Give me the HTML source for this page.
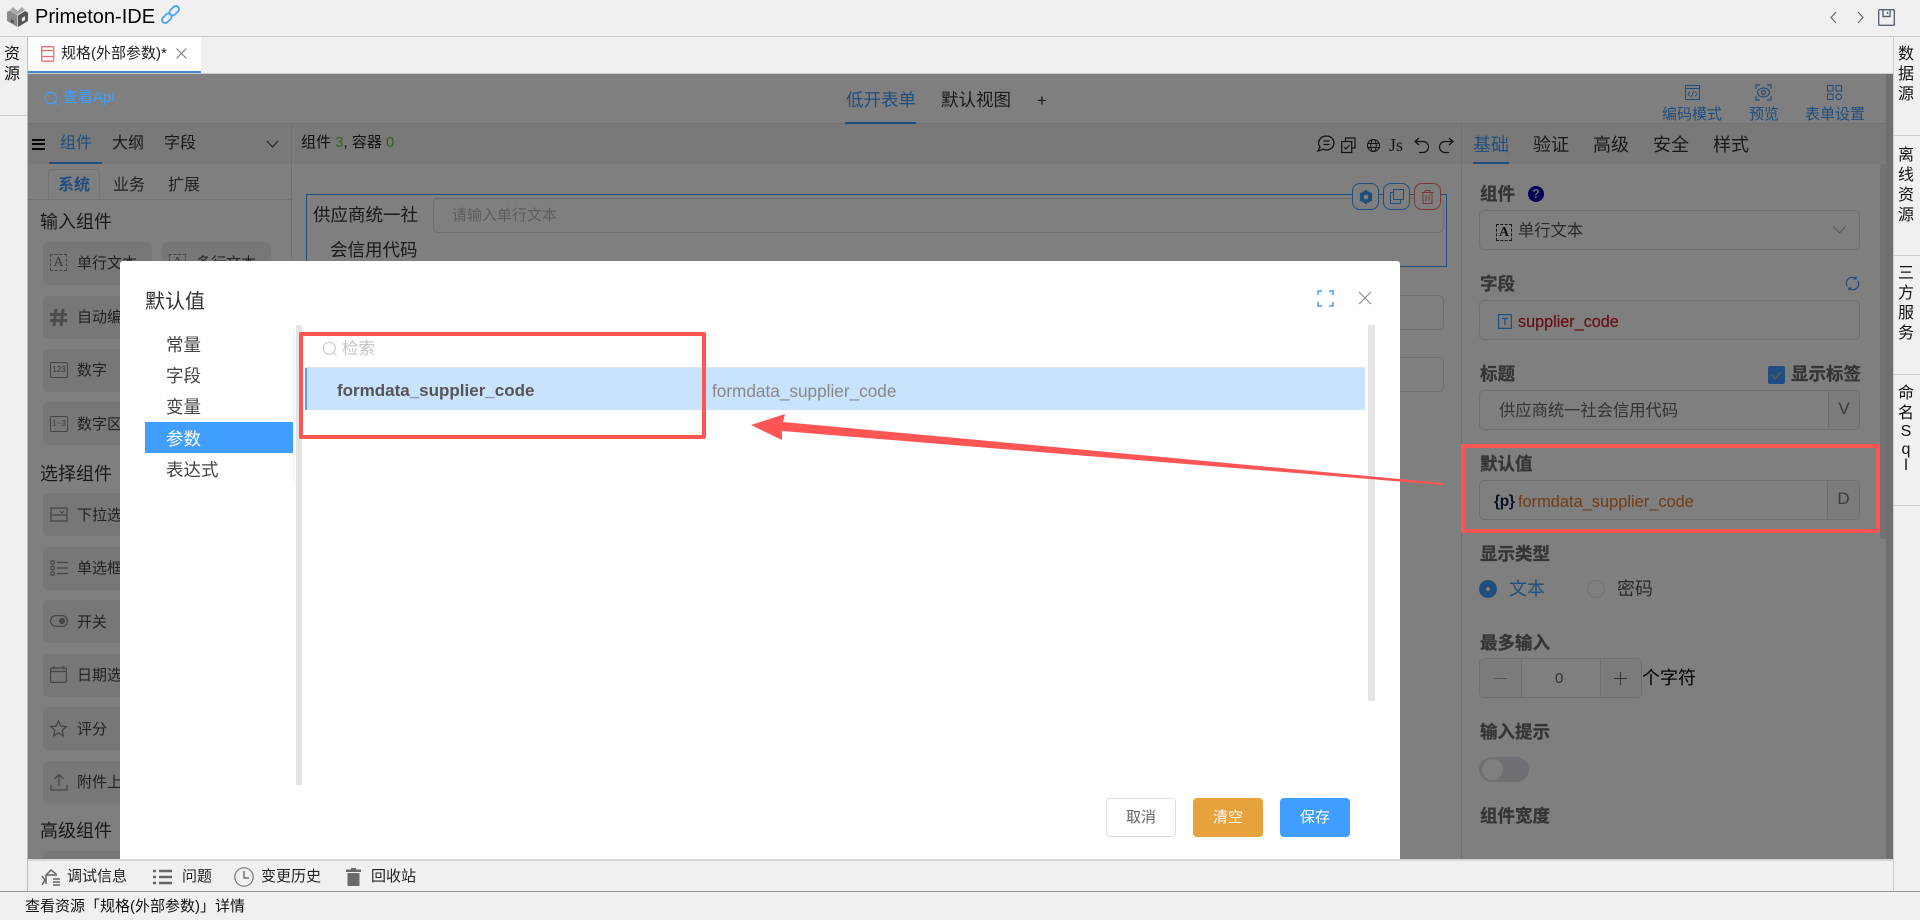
<!DOCTYPE html>
<html lang="zh-CN"><head><meta charset="utf-8"><title>Primeton-IDE</title>
<style>
*{box-sizing:border-box}
html,body{margin:0;padding:0;width:1920px;height:920px;overflow:hidden;background:#f0f0f0;font-family:"Liberation Sans","Noto Sans CJK SC",sans-serif;color:#000}
.a{position:absolute}
.t{position:absolute;white-space:nowrap;line-height:20px;height:20px}
svg{position:absolute;overflow:visible}
.b{font-weight:bold}
.card{position:absolute;background:#eeeef1;border-radius:5px;width:109px;height:43px}
.ct{position:absolute;white-space:nowrap;line-height:20px;height:20px;font-size:15px;color:#444;left:77px}
.lbl{position:absolute;white-space:nowrap;line-height:20px;height:20px;font-size:17.5px;font-weight:bold;color:#6a6a6a;-webkit-text-stroke:.3px #6a6a6a}
.inp{position:absolute;border:1px solid #dcdfe6;border-radius:5px;background:#fff}
.v{position:absolute;width:20px;text-align:center;line-height:20px;height:20px;font-size:16px;color:#111;white-space:nowrap}
.ln{position:absolute;background:#ccc}
</style></head><body>

<!-- title bar -->
<svg style="left:7px;top:7px" width="21" height="20" viewBox="0 0 21 20"><path d="M0 5l3-1.500 4 2.500 3.500 2.500v11.500L0 14z" fill="#8a8a8a"/><path d="M11 8.500L18 4l3 1.500V14l-10 6z" fill="#555"/><path d="M3 3l3-3 4.500 4 4.500-4 3 3-7.500 5z" fill="#a8a8a8"/><path d="M15 11l3-1.800V13l-3 1.800z" fill="#f0f0f0"/><path d="M4 12l3 1.800v3L4 15z" fill="#555"/></svg>
<div class="t" style="left:35px;top:7px;font-size:20px">Primeton-IDE</div>
<svg style="left:161px;top:5px" width="19" height="19" viewBox="0 0 19 19" fill="none" stroke="#409eff" stroke-width="1.700"><rect x="-5.500" y="-3.200" width="11" height="6.400" rx="3.200" transform="translate(5.800 13.200) rotate(-45)"/><rect x="-5.500" y="-3.200" width="11" height="6.400" rx="3.200" transform="translate(13.200 5.800) rotate(-45)"/></svg>
<svg style="left:1829px;top:10px" width="10" height="15" viewBox="0 0 10 15" fill="none" stroke="#666" stroke-width="1.100"><path d="M7 2L2 7.500 7 13"/></svg>
<svg style="left:1855px;top:10px" width="10" height="15" viewBox="0 0 10 15" fill="none" stroke="#666" stroke-width="1.100"><path d="M3 2l5 5.500L3 13"/></svg>
<svg style="left:1878px;top:9px" width="17" height="17" viewBox="0 0 17 17" fill="none" stroke="#5a6472" stroke-width="1.400"><rect x=".7" y=".7" width="15.600" height="15.600" rx="1"/><path d="M5 1v6.500h7V1M9.500 3v2"/></svg>
<div class="a" style="left:0;top:36px;width:1920px;height:1px;background:#ccc"></div>

<!-- left rail -->
<div class="v" style="left:2px;top:45px">资</div>
<div class="v" style="left:2px;top:65px">源</div>
<div class="ln" style="left:0;top:115px;width:27px;height:1px"></div>
<div class="ln" style="left:27px;top:37px;width:1px;height:855px;background:#bbb"></div>

<!-- right rail -->
<div class="ln" style="left:1893px;top:37px;width:1px;height:855px;background:#ccc"></div>
<div class="v" style="left:1896px;top:45px">数</div><div class="v" style="left:1896px;top:65px">据</div><div class="v" style="left:1896px;top:85px">源</div>
<div class="ln" style="left:1894px;top:135px;width:26px;height:1px"></div>
<div class="v" style="left:1896px;top:146px">离</div><div class="v" style="left:1896px;top:166px">线</div><div class="v" style="left:1896px;top:186px">资</div><div class="v" style="left:1896px;top:206px">源</div>
<div class="ln" style="left:1894px;top:255px;width:26px;height:1px"></div>
<div class="v" style="left:1896px;top:264px">三</div><div class="v" style="left:1896px;top:284px">方</div><div class="v" style="left:1896px;top:304px">服</div><div class="v" style="left:1896px;top:324px">务</div>
<div class="ln" style="left:1894px;top:374px;width:26px;height:1px"></div>
<div class="v" style="left:1896px;top:384px">命</div><div class="v" style="left:1896px;top:404px">名</div><div class="v" style="left:1896px;top:422px">S</div><div class="v" style="left:1896px;top:440px">q</div><div class="v" style="left:1896px;top:456px">l</div>
<div class="ln" style="left:1894px;top:505px;width:26px;height:1px"></div>

<!-- tab -->
<div class="a" style="left:28px;top:37px;width:173px;height:36px;background:#fff;border-bottom:2px solid #4a86d0"></div>
<svg style="left:41px;top:46px" width="14" height="16" viewBox="0 0 14 16" fill="none" stroke="#f56c6c" stroke-width="1.300"><rect x=".7" y=".7" width="12" height="14.500" rx="1"/><path d="M.7 4.500h12M.7 10.500h12"/></svg>
<div class="t" style="left:61px;top:44px;font-size:15px;color:#222">规格(外部参数)*</div>
<svg style="left:176px;top:48px" width="11" height="11" viewBox="0 0 11 11" stroke="#777" stroke-width="1"><path d="M.5.5l10 10M10.500.5l-10 10"/></svg>
<div class="a" style="left:28px;top:73px;width:1865px;height:1px;background:#ccc"></div>

<!-- underlying page -->
<div class="a" style="left:28px;top:74px;width:1865px;height:785px;background:#fff"></div>
<div class="a" style="left:28px;top:123px;width:1858px;height:1px;background:#e4e4e4"></div>
<div class="a" style="left:28px;top:124px;width:1858px;height:40px;background:#f2f2f2"></div>
<div class="a" style="left:1886px;top:74px;width:7px;height:785px;background:#dedede"></div>
<div class="a" style="left:1880px;top:164px;width:6px;height:375px;background:#e6e6e6"></div>

<div class="t" style="left:846px;top:90px;font-size:17.500px;color:#409eff">低开表单</div>
<div class="a" style="left:845px;top:122px;width:71px;height:2px;background:#409eff"></div>
<div class="t" style="left:941px;top:90px;font-size:17.500px;color:#333">默认视图</div>
<div class="t" style="left:1037px;top:91px;font-size:17px;color:#222">+</div>

<!-- header right icons -->
<svg style="left:1685px;top:85px" width="15" height="15" viewBox="0 0 15 15" fill="none" stroke="#4a9af0" stroke-width="1"><rect x=".5" y=".5" width="14" height="14"/><path d="M.5 3.500h14M5 6.500L3 9l2 2.500M10 6.500L12 9l-2 2.500M8.500 6l-2 6"/></svg>
<svg style="left:1755px;top:84px" width="17" height="17" viewBox="0 0 17 17" fill="none" stroke="#4a9af0" stroke-width="1.200"><path d="M1 5V1h4M12 1h4v4M16 12v4h-4M5 16H1v-4"/><ellipse cx="8.500" cy="8.500" rx="6" ry="4.500"/><circle cx="8.500" cy="8.500" r="2"/></svg>
<svg style="left:1827px;top:85px" width="15" height="15" viewBox="0 0 15 15" fill="none" stroke="#4a9af0" stroke-width="1.100"><rect x=".5" y=".5" width="5.500" height="5.500"/><rect x="9" y=".5" width="5.500" height="5.500"/><rect x=".5" y="9" width="5.500" height="5.500"/><circle cx="11.700" cy="11.700" r="2.800"/></svg>
<div class="t" style="left:1662px;top:105px;font-size:15px;color:#409eff">编码模式</div>
<div class="t" style="left:1749px;top:105px;font-size:15px;color:#409eff">预览</div>
<div class="t" style="left:1805px;top:105px;font-size:15px;color:#409eff">表单设置</div>

<!-- left panel -->
<div class="a" style="left:291px;top:124px;width:1px;height:735px;background:#e2e2e2"></div>
<div class="a" style="left:32px;top:139px;width:13px;height:11px;border-top:2px solid #111;border-bottom:2px solid #111"></div>
<div class="a" style="left:32px;top:143px;width:13px;height:2px;background:#111"></div>
<div class="t" style="left:60px;top:134px;font-size:16px;color:#409eff">组件</div>
<div class="t" style="left:112px;top:134px;font-size:16px;color:#333">大纲</div>
<div class="t" style="left:164px;top:134px;font-size:16px;color:#333">字段</div>
<svg style="left:266px;top:140px" width="13" height="9" viewBox="0 0 13 9" fill="none" stroke="#333" stroke-width="1"><path d="M1 1l5.500 6L12 1"/></svg>
<div class="a" style="left:49px;top:162px;width:53px;height:2px;background:#409eff"></div>
<div class="a" style="left:28px;top:199px;width:263px;height:1px;background:#e8e8e8"></div>
<div class="a" style="left:48px;top:169px;width:52px;height:30px;background:#fff;border:1px solid #e4e7ed;border-bottom:0;border-radius:4px 4px 0 0"></div>
<div class="t b" style="left:58px;top:176px;font-size:16px;color:#409eff">系统</div>
<div class="t" style="left:113px;top:176px;font-size:16px;color:#444">业务</div>
<div class="t" style="left:168px;top:176px;font-size:16px;color:#444">扩展</div>
<div class="t" style="left:40px;top:212px;font-size:18px;color:#333">输入组件</div>
<div class="t" style="left:40px;top:464px;font-size:18px;color:#333">选择组件</div>
<div class="t" style="left:40px;top:821px;font-size:18px;color:#333">高级组件</div>

<div class="card" style="left:43px;top:242px"></div>
<div class="card" style="left:162px;top:242px"></div>
<div class="card" style="left:43px;top:296px"></div>
<div class="card" style="left:43px;top:349px"></div>
<div class="card" style="left:43px;top:402px"></div>
<div class="card" style="left:43px;top:493px"></div>
<div class="card" style="left:43px;top:547px"></div>
<div class="card" style="left:43px;top:600px"></div>
<div class="card" style="left:43px;top:654px"></div>
<div class="card" style="left:43px;top:707px"></div>
<div class="card" style="left:43px;top:761px"></div>
<div class="card" style="left:43px;top:851px;height:8px;border-radius:5px 5px 0 0"></div>

<div class="a" style="left:50px;top:254px;width:17px;height:17px;border:1px dashed #888;text-align:center;line-height:15px;font-family:'Liberation Serif',serif;font-size:14px;color:#777">A</div>
<div class="ct" style="top:254px">单行文本</div>
<div class="a" style="left:169px;top:254px;width:17px;height:17px;border:1px dashed #888;text-align:center;line-height:15px;font-family:'Liberation Serif',serif;font-size:14px;color:#777">A</div>
<div class="ct" style="top:254px;left:196px">多行文本</div>
<svg style="left:50px;top:309px" width="17" height="17" viewBox="0 0 17 17" fill="none" stroke="#999" stroke-width="3"><path d="M6 0L4 17M13 0l-2 17M0 5.500h17M0 11.500h17"/></svg>
<div class="ct" style="top:308px">自动编号</div>
<div class="a" style="left:50px;top:362px;width:18px;height:16px;border:1px solid #888;border-radius:2px;text-align:center;line-height:14px;font-size:8px;color:#777">123</div>
<div class="ct" style="top:361px">数字</div>
<div class="a" style="left:50px;top:416px;width:18px;height:16px;border:1px solid #888;border-radius:2px;text-align:center;line-height:14px;font-size:8px;color:#777">1~3</div>
<div class="ct" style="top:415px">数字区间</div>
<svg style="left:50px;top:507px" width="18" height="15" viewBox="0 0 18 15" fill="none" stroke="#888" stroke-width="1.200"><path d="M1 8V1h16v7H1zM1 8v6h16V8M10 4l2 2 2-2"/></svg>
<div class="ct" style="top:506px">下拉选择</div>
<svg style="left:50px;top:560px" width="18" height="16" viewBox="0 0 18 16" fill="none" stroke="#888" stroke-width="1.200"><circle cx="2.500" cy="2.500" r="1.800"/><circle cx="2.500" cy="8" r="1.800"/><circle cx="2.500" cy="13.500" r="1.800"/><path d="M7 2.500h11M7 8h11M7 13.500h11"/></svg>
<div class="ct" style="top:559px">单选框组</div>
<svg style="left:50px;top:615px" width="18" height="12" viewBox="0 0 18 12" fill="none" stroke="#888" stroke-width="1.200"><rect x=".6" y=".6" width="16.800" height="10.800" rx="5.400"/><circle cx="12" cy="6" r="2.500" fill="#888"/></svg>
<div class="ct" style="top:613px">开关</div>
<svg style="left:50px;top:666px" width="17" height="17" viewBox="0 0 17 17" fill="none" stroke="#888" stroke-width="1.200"><rect x=".6" y="2" width="15.800" height="14.400" rx="1"/><path d="M.6 5.500h15.800M4 0v3.500M13 0v3.500"/></svg>
<div class="ct" style="top:666px">日期选择</div>
<svg style="left:50px;top:720px" width="17" height="17" viewBox="0 0 17 17" fill="none" stroke="#888" stroke-width="1.300"><path d="M8.500 1l2.300 5 5.400.6-4 3.700 1.100 5.400-4.800-2.700-4.800 2.700 1.100-5.400-4-3.700 5.400-.6z"/></svg>
<div class="ct" style="top:720px">评分</div>
<svg style="left:50px;top:773px" width="18" height="18" viewBox="0 0 18 18" fill="none" stroke="#888" stroke-width="1.300"><path d="M9 13V1.500M4.500 6L9 1.500 13.500 6M1 12v5h16v-5"/></svg>
<div class="ct" style="top:773px">附件上传</div>

<!-- toolbar -->
<div class="t" style="left:301px;top:133px;font-size:15px;color:#222">组件 <span style="color:#67c23a">3</span>, 容器 <span style="color:#67c23a">0</span></div>
<svg style="left:1317px;top:135px" width="18" height="17" viewBox="0 0 18 17" fill="none" stroke="#222" stroke-width="1.300"><path d="M9.500 1a7.500 7 0 1 1-3.500 13.200L1 16l2-4A7.500 7 0 0 1 9.500 1zM6.500 6h6M6.500 9.500h6"/></svg>
<svg style="left:1341px;top:137px" width="15" height="16" viewBox="0 0 15 16" fill="none" stroke="#222" stroke-width="1.200"><path d="M4.500 4V1h9.500v10h-3"/><rect x=".7" y="4.500" width="10" height="11"/><path d="M3 10l2 2 3.500-4"/></svg>
<svg style="left:1367px;top:139px" width="13" height="13" viewBox="0 0 13 13" fill="none" stroke="#222"><circle cx="6.500" cy="6.500" r="6"/><ellipse cx="6.500" cy="6.500" rx="2.800" ry="6"/><path d="M.5 4.500h12M.5 8.500h12"/></svg>
<div class="t" style="left:1389px;top:135px;font-size:18px;font-family:'Liberation Serif',serif;color:#333">Js</div>
<svg style="left:1414px;top:137px" width="16" height="16" viewBox="0 0 16 16" fill="none" stroke="#222" stroke-width="1.200"><path d="M5 1L1 4.500 5 8M1 4.500h8a5.500 5.500 0 0 1 0 11H5"/></svg>
<svg style="left:1438px;top:137px" width="16" height="16" viewBox="0 0 16 16" fill="none" stroke="#222" stroke-width="1.200"><path d="M11 1l4 3.500L11 8M15 4.500H7a5.500 5.500 0 0 0 0 11h4"/></svg>

<!-- canvas -->
<div class="a" style="left:306px;top:194px;width:1141px;height:73px;border:1px solid #409eff"></div>
<div class="t" style="left:313px;top:205px;font-size:17.500px;color:#333">供应商统一社</div>
<div class="t" style="left:330px;top:240px;font-size:17.500px;color:#333">会信用代码</div>
<div class="inp" style="left:433px;top:198px;width:1011px;height:35px"></div>
<div class="t" style="left:452px;top:206px;font-size:15px;color:#bbb">请输入单行文本</div>
<div class="inp" style="left:1300px;top:295px;width:144px;height:35px"></div>
<div class="inp" style="left:1300px;top:357px;width:144px;height:35px"></div>
<div class="a" style="left:1352px;top:183px;width:27px;height:27px;border:1px solid #409eff;border-radius:8px;background:#fff"></div>
<div class="a" style="left:1383px;top:183px;width:27px;height:27px;border:1px solid #409eff;border-radius:8px;background:#fff"></div>
<div class="a" style="left:1414px;top:183px;width:27px;height:27px;border:1px solid #f56c6c;border-radius:8px;background:#fff"></div>
<svg style="left:1359px;top:190px" width="14" height="14" viewBox="0 0 14 14"><circle cx="7" cy="7" r="4.500" fill="none" stroke="#409eff" stroke-width="3.400"/><path d="M7 0v14M1 3.500l12 7M13 3.500l-12 7" stroke="#409eff" stroke-width="2"/><circle cx="7" cy="7" r="2.200" fill="#fff"/></svg>
<svg style="left:1390px;top:189px" width="14" height="15" viewBox="0 0 14 15" fill="none" stroke="#409eff"><rect x="3.500" y=".5" width="10" height="10"/><path d="M3.500 3.500h-3v11h10v-4"/></svg>
<svg style="left:1421px;top:190px" width="13" height="14" viewBox="0 0 13 14" fill="none" stroke="#f56c6c"><path d="M.5 2.500h12M4 2.500V.5h5v2M2 2.500v11h9v-11M5 5v6M8 5v6"/></svg>

<!-- right panel -->
<div class="a" style="left:1461px;top:124px;width:1px;height:735px;background:#e2e2e2"></div>
<div class="t" style="left:1473px;top:135px;font-size:18px;color:#409eff">基础</div>
<div class="t" style="left:1533px;top:135px;font-size:18px;color:#333">验证</div>
<div class="t" style="left:1593px;top:135px;font-size:18px;color:#333">高级</div>
<div class="t" style="left:1653px;top:135px;font-size:18px;color:#333">安全</div>
<div class="t" style="left:1713px;top:135px;font-size:18px;color:#333">样式</div>
<div class="a" style="left:1473px;top:162px;width:36px;height:2px;background:#409eff"></div>

<div class="lbl" style="left:1480px;top:184px">组件</div>
<div class="a" style="left:1528px;top:186px;width:16px;height:16px;border-radius:50%;background:#0000a8;color:#ccc;font-size:13px;font-weight:bold;text-align:center;line-height:16px">?</div>
<div class="inp" style="left:1479px;top:210px;width:381px;height:40px"></div>
<div class="a" style="left:1496px;top:224px;width:16px;height:17px;border:1px dashed #333;text-align:center;line-height:15px;font-family:'Liberation Serif',serif;font-weight:bold;font-size:14px;color:#222">A</div>
<div class="t" style="left:1518px;top:221px;font-size:16.300px;color:#555">单行文本</div>
<svg style="left:1833px;top:226px" width="13" height="8" viewBox="0 0 13 8" fill="none" stroke="#aaa"><path d="M.5.5l6 6.500 6-6.500"/></svg>

<div class="lbl" style="left:1480px;top:274px">字段</div>
<svg style="left:1845px;top:276px" width="15" height="15" viewBox="0 0 15 15" fill="none" stroke="#409eff" stroke-width="1.300"><path d="M2 10A6 6 0 0 1 11 2.500M13 5a6 6 0 0 1-9 7.500M11 .5v2.500H8.500M4 14.500V12h2.500"/></svg>
<div class="inp" style="left:1479px;top:300px;width:381px;height:40px"></div>
<svg style="left:1498px;top:314px" width="14" height="15" viewBox="0 0 14 15" fill="none" stroke="#409eff" stroke-width="1.200"><rect x=".6" y=".6" width="12.800" height="13.800"/><path d="M4 4.500h6M7 4.500v6.500"/></svg>
<div class="t" style="left:1518px;top:312px;font-size:16.200px;color:#d01f26;-webkit-text-stroke:.2px #d01f26">supplier_code</div>

<div class="lbl" style="left:1480px;top:364px">标题</div>
<div class="a" style="left:1768px;top:366px;width:17px;height:18px;background:#409eff;border-radius:2px"></div>
<svg style="left:1771px;top:371px" width="11" height="9" viewBox="0 0 11 9" fill="none" stroke="#bbb" stroke-width="1.200"><path d="M1 4l3.500 3.500L10 1"/></svg>
<div class="lbl" style="left:1791px;top:364px">显示标签</div>
<div class="inp" style="left:1479px;top:390px;width:381px;height:40px"></div>
<div class="a" style="left:1828px;top:391px;width:31px;height:38px;background:#f5f7fa;border-left:1px solid #dcdfe6;border-radius:0 4px 4px 0;text-align:center;line-height:36px;font-size:17px;color:#777">V</div>
<div class="t" style="left:1499px;top:401px;font-size:16.300px;color:#666">供应商统一社会信用代码</div>

<div class="lbl" style="left:1480px;top:454px">默认值</div>
<div class="inp" style="left:1479px;top:480px;width:381px;height:40px"></div>
<div class="a" style="left:1827px;top:481px;width:32px;height:38px;background:#f5f7fa;border-left:1px solid #dcdfe6;border-radius:0 4px 4px 0;text-align:center;line-height:36px;font-size:17px;color:#777">D</div>
<div class="t b" style="left:1494px;top:492px;font-size:15.500px;color:#11224a;letter-spacing:-.3px">{p}</div>
<div class="t" style="left:1518px;top:492px;font-size:16.400px;color:#e6792a">formdata_supplier_code</div>

<div class="lbl" style="left:1480px;top:544px">显示类型</div>
<div class="a" style="left:1479px;top:580px;width:18px;height:18px;border-radius:50%;background:#409eff"></div>
<div class="a" style="left:1486px;top:587px;width:4px;height:4px;border-radius:50%;background:#fff"></div>
<div class="t" style="left:1509px;top:579px;font-size:18px;color:#409eff">文本</div>
<div class="a" style="left:1587px;top:580px;width:18px;height:18px;border-radius:50%;border:1px solid #dcdfe6"></div>
<div class="t" style="left:1617px;top:579px;font-size:18px;color:#555">密码</div>

<div class="lbl" style="left:1480px;top:633px">最多输入</div>
<div class="inp" style="left:1479px;top:658px;width:163px;height:40px;overflow:hidden">
<div class="a" style="left:0;top:0;width:42px;height:38px;background:#f5f7fa;border-right:1px solid #dcdfe6"></div>
<div class="a" style="right:0;top:0;width:41px;height:38px;background:#f5f7fa;border-left:1px solid #dcdfe6"></div>
</div>
<div class="a" style="left:1494px;top:678px;width:13px;height:1px;background:#aaa"></div>
<div class="a" style="left:1614px;top:678px;width:13px;height:1px;background:#666"></div>
<div class="a" style="left:1620px;top:672px;width:1px;height:13px;background:#666"></div>
<div class="t" style="left:1555px;top:669px;font-size:15px;color:#666">0</div>
<div class="t" style="left:1642px;top:668px;font-size:18px;color:#000">个字符</div>

<div class="lbl" style="left:1480px;top:722px">输入提示</div>
<div class="a" style="left:1479px;top:757px;width:50px;height:25px;border-radius:13px;background:#dfe1e7"></div>
<div class="a" style="left:1482px;top:759px;width:21px;height:21px;border-radius:50%;background:#fff"></div>
<div class="lbl" style="left:1480px;top:806px">组件宽度</div>

<!-- overlay -->
<div class="a" style="left:28px;top:74px;width:1865px;height:785px;background:rgba(0,0,0,.5)"></div>

<!-- API link on top -->
<svg style="left:44px;top:91px" width="15" height="15" viewBox="0 0 15 15" fill="none" stroke="#409eff" stroke-width="1.100"><circle cx="7" cy="7" r="5.800"/><path d="M11 11l3 3"/></svg>
<div class="t" style="left:63px;top:88px;font-size:15px;color:#409eff">查看Api</div>

<!-- modal -->
<div class="a" style="left:120px;top:261px;width:1280px;height:598px;background:#fff;border-radius:3px 3px 0 0"></div>
<div class="t" style="left:145px;top:292px;font-size:20px;color:#303133">默认值</div>
<svg style="left:1317px;top:290px" width="17" height="17" viewBox="0 0 17 17" fill="none" stroke="#409eff" stroke-width="1.500"><path d="M1 5V1h4M12 1h4v4M16 12v4h-4M5 16H1v-4"/></svg>
<svg style="left:1358px;top:291px" width="14" height="14" viewBox="0 0 14 14" stroke="#888" stroke-width="1.100"><path d="M1 1l12 12M13 1L1 13"/></svg>

<div class="t" style="left:166px;top:335px;font-size:17.500px;color:#444">常量</div>
<div class="t" style="left:166px;top:366px;font-size:17.500px;color:#444">字段</div>
<div class="t" style="left:166px;top:397px;font-size:17.500px;color:#444">变量</div>
<div class="a" style="left:145px;top:422px;width:148px;height:31px;background:#409eff"></div>
<div class="t" style="left:166px;top:429px;font-size:17.500px;color:#fff">参数</div>
<div class="t" style="left:166px;top:460px;font-size:17.500px;color:#444">表达式</div>
<div class="a" style="left:293px;top:329px;width:1px;height:155px;background:#eee"></div>
<div class="a" style="left:296px;top:325px;width:6px;height:460px;background:#e5e5e5"></div>
<div class="a" style="left:1368px;top:325px;width:7px;height:376px;background:#e5e5e5"></div>

<svg style="left:322px;top:341px" width="16" height="16" viewBox="0 0 16 16" fill="none" stroke="#c8ccd2" stroke-width="1.200"><circle cx="7.300" cy="7.300" r="6"/><path d="M11.500 11.500l3 3"/></svg>
<div class="t" style="left:342px;top:339px;font-size:16.500px;color:#c0c4cc">检索</div>
<div class="a" style="left:305px;top:367px;width:1060px;height:1px;background:#dfe3e8"></div>
<div class="a" style="left:305px;top:368px;width:1060px;height:42px;background:#c9e3fd;border-left:2px solid #5a9ee8"></div>
<div class="t b" style="left:337px;top:381px;font-size:17px;color:#555;line-height:20px">formdata_supplier_code</div>
<div class="t" style="left:712px;top:381px;font-size:17.200px;color:#888">formdata_supplier_code</div>

<div class="a" style="left:1106px;top:798px;width:70px;height:39px;background:#fff;border:1px solid #dcdfe6;border-radius:4px;text-align:center;line-height:37px;font-size:15px;color:#666">取消</div>
<div class="a" style="left:1193px;top:798px;width:70px;height:39px;background:#e6a23c;border-radius:4px;text-align:center;line-height:39px;font-size:15px;color:#fff">清空</div>
<div class="a" style="left:1280px;top:798px;width:70px;height:39px;background:#409eff;border-radius:4px;text-align:center;line-height:39px;font-size:15px;color:#fff">保存</div>

<!-- annotations -->
<div class="a" style="left:299px;top:332px;width:407px;height:107px;border:4.500px solid #ff5555;border-radius:2px"></div>
<div class="a" style="left:1461px;top:444px;width:419px;height:89px;border:4.500px solid #ff5555;border-radius:2px"></div>
<svg style="left:0;top:0" width="1920" height="920" viewBox="0 0 1920 920"><polygon points="751,425 785,414 783,422 1443,483 1443,485 782,431 782,440" fill="#ff5555"/></svg>

<!-- bottom bar -->
<div class="a" style="left:28px;top:859px;width:1865px;height:2px;background:#d8d8d8"></div>
<svg style="left:41px;top:869px" width="20" height="17" viewBox="0 0 20 17" fill="none" stroke="#666" stroke-width="1.500"><path d="M1 16l3-5-3-4M5 15V6l5-5 5 4v2M5 6h9M12 10h7M12 13h7M12 16h7"/></svg>
<div class="t" style="left:67px;top:867px;font-size:15px;color:#222">调试信息</div>
<svg style="left:153px;top:869px" width="19" height="16" viewBox="0 0 19 16" fill="none" stroke="#666" stroke-width="2.600"><path d="M0 2h3M6 2h13M0 8h3M6 8h13M0 14h3M6 14h13"/></svg>
<div class="t" style="left:182px;top:867px;font-size:15px;color:#222">问题</div>
<svg style="left:234px;top:867px" width="20" height="20" viewBox="0 0 20 20" fill="none" stroke="#777" stroke-width="1.200"><circle cx="10" cy="10" r="9.200"/><path d="M10 4v7h5" stroke="#555"/></svg>
<div class="t" style="left:261px;top:867px;font-size:15px;color:#222">变更历史</div>
<svg style="left:346px;top:868px" width="15" height="18" viewBox="0 0 15 18" fill="#6a6a6a"><path d="M5 0h5v1.500h5V4H0V1.500h5zM1.500 5h12v12a1 1 0 0 1-1 1h-10a1 1 0 0 1-1-1z"/></svg>
<div class="t" style="left:371px;top:867px;font-size:15px;color:#222">回收站</div>
<div class="a" style="left:0;top:891px;width:1920px;height:1px;background:#999"></div>
<div class="t" style="left:25px;top:897px;font-size:15px;color:#111">查看资源「规格(外部参数)」详情</div>
</body></html>
